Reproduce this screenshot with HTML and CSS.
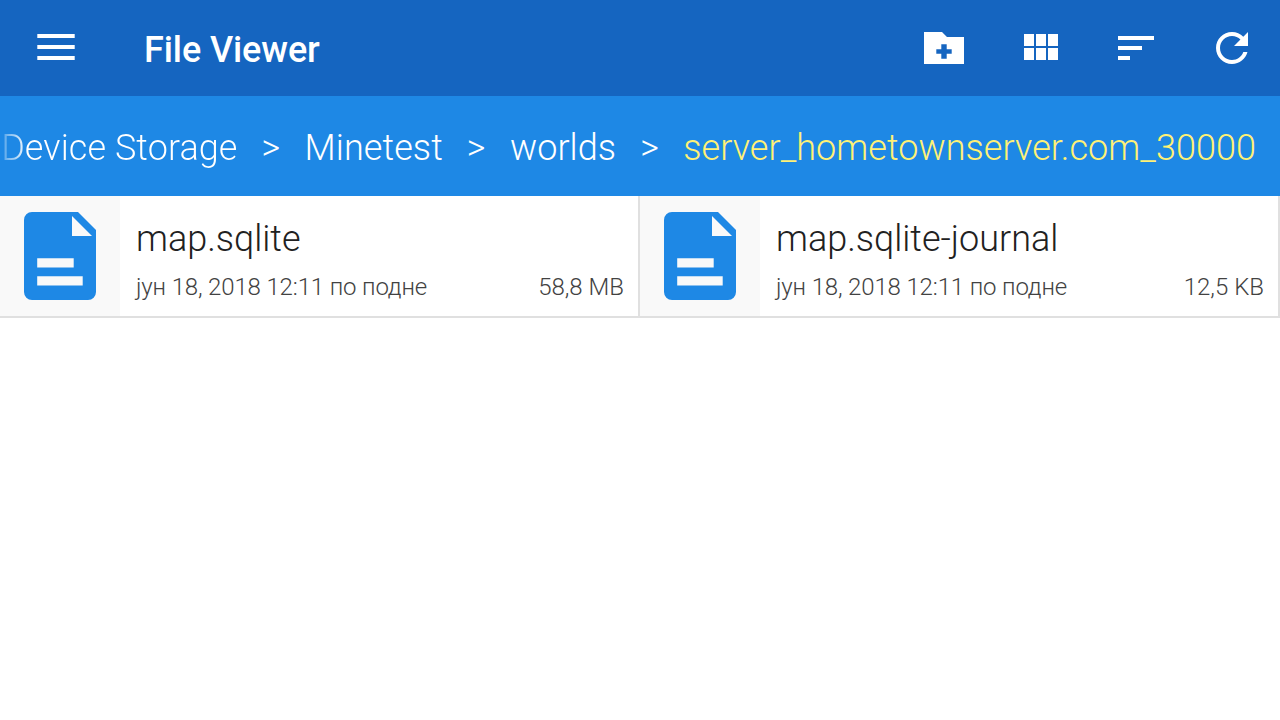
FILE: index.html
```html
<!DOCTYPE html>
<html lang="sr">
<head>
<meta charset="utf-8">
<title>File Viewer</title>
<link rel="stylesheet" href="styles.css">
</head>
<body>
<header class="toolbar">
  <button class="action menu" aria-label="Menu"><svg width="48" height="48" viewBox="0 0 48 48"><path d="M5.3 10h37.4v4H5.3zM5.3 21h37.4v4H5.3zM5.3 32h37.4v4H5.3z"/></svg></button>
  <h1 class="title">File Viewer</h1>
  <button class="action" aria-label="New folder"><svg width="48" height="48" viewBox="0 0 48 48"><path fill-rule="evenodd" d="M4 8h18l5 5h17v27H4zM21.3 20.3v4.9h-5v4.6h5v4.9h5.4v-4.9h5v-4.6h-5v-4.9z"/></svg></button>
  <button class="action" aria-label="Grid view"><svg width="48" height="48" viewBox="0 0 48 48"><path d="M8 10h10v12H8zM20 10h10v12H20zM32 10h10v12H32zM8 24h10v12H8zM20 24h10v12H20zM32 24h10v12H32z"/></svg></button>
  <button class="action" aria-label="Sort"><svg width="48" height="48" viewBox="0 0 48 48"><path d="M6 12h36v4H6zM6 22h24v4H6zM6 32h12v4H6z"/></svg></button>
  <button class="action" aria-label="Refresh"><svg width="48" height="48" viewBox="0 0 24 24"><path d="M17.65 6.35C16.2 4.9 14.21 4 12 4c-4.42 0-7.99 3.58-7.99 8s3.57 8 7.99 8c3.73 0 6.84-2.55 7.73-6h-2.08c-.82 2.33-3.04 4-5.65 4-3.31 0-6-2.69-6-6s2.69-6 6-6c1.66 0 3.14.69 4.22 1.78L13 11h7V4l-2.35 2.35z"/></svg></button>
</header>
<nav class="crumbs">
  <span class="crumb">Device Storage</span>
  <span class="sep">&gt;</span>
  <span class="crumb">Minetest</span>
  <span class="sep">&gt;</span>
  <span class="crumb">worlds</span>
  <span class="sep">&gt;</span>
  <span class="crumb current">server_hometownserver.com_30000</span>
</nav>
<main class="files">
  <article class="file">
    <div class="thumb"><svg width="72" height="88" viewBox="0 0 72 88"><path fill-rule="evenodd" d="M8 0h46l18 18v62a8 8 0 0 1-8 8H8a8 8 0 0 1-8-8V8a8 8 0 0 1 8-8zM48 4v20h20zM13.2 46.2v9.3h36.5v-9.3zM13.2 64.2v9.3h45.5v-9.3z"/></svg></div>
    <div class="info">
      <div class="name">map.sqlite</div>
      <div class="meta"><span class="date">јун 18, 2018 12:11 по подне</span><span class="size">58,8 MB</span></div>
    </div>
  </article>
  <article class="file">
    <div class="thumb"><svg width="72" height="88" viewBox="0 0 72 88"><path fill-rule="evenodd" d="M8 0h46l18 18v62a8 8 0 0 1-8 8H8a8 8 0 0 1-8-8V8a8 8 0 0 1 8-8zM48 4v20h20zM13.2 46.2v9.3h36.5v-9.3zM13.2 64.2v9.3h45.5v-9.3z"/></svg></div>
    <div class="info">
      <div class="name">map.sqlite-journal</div>
      <div class="meta"><span class="date">јун 18, 2018 12:11 по подне</span><span class="size">12,5 KB</span></div>
    </div>
  </article>
</main>
</body>
</html>
```

FILE: styles.css
```css
* { box-sizing: border-box; }
body {
  margin: 0;
  height: 720px;
  overflow: hidden;
  background: #fff;
  font-family: Roboto, sans-serif;
  font-weight: 300;
}
.toolbar {
  display: flex;
  align-items: center;
  height: 96px;
  background: #1565c0;
}
.action {
  display: flex;
  align-items: center;
  justify-content: center;
  width: 96px;
  height: 96px;
  padding: 0;
  border: 0;
  background: none;
}
.action svg { fill: #fff; }
.menu { width: 112px; }
.title {
  flex: 1;
  margin: 0;
  padding: 4px 0 0 32px;
  color: #fff;
  font-size: 36px;
  font-weight: 500;
  letter-spacing: -0.1px;
  line-height: 42px;
}
.crumbs {
  display: flex;
  align-items: center;
  justify-content: flex-end;
  gap: 24px;
  height: 100px;
  padding: 4px 24px 0 0;
  background: #1e88e5;
  color: #fff;
  font-size: 36px;
  line-height: 42px;
  white-space: nowrap;
}
.crumb { letter-spacing: 0.07px; }
.sep { letter-spacing: 0.4px; }
.crumb:first-child {
  background: linear-gradient(90deg, rgba(255,255,255,.2), #fff 26px);
  background-clip: text;
  -webkit-background-clip: text;
  color: transparent;
}
.crumb.current {
  color: #fff176;
  letter-spacing: 0.05px;
}
.files {
  display: grid;
  grid-template-columns: 1fr 1fr;
}
.file {
  display: flex;
  height: 122px;
  border-right: 2px solid #e0e0e0;
  border-bottom: 2px solid #e0e0e0;
}
.thumb {
  display: flex;
  align-items: center;
  justify-content: center;
  width: 120px;
  background: #f9f9f9;
}
.thumb svg { fill: #1e88e5; }
.info {
  flex: 1;
  padding: 22px 14px 0 16px;
}
.name {
  color: #212121;
  font-size: 36px;
  line-height: 42px;
}
.meta {
  display: flex;
  justify-content: space-between;
  margin-top: 13px;
  color: #424242;
  font-size: 24px;
  line-height: 28px;
}
.date { letter-spacing: -0.15px; }
```
